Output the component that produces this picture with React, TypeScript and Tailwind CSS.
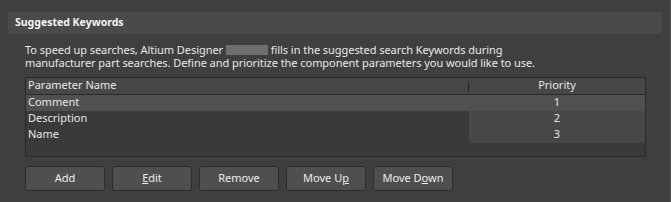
const FONT = { fontFamily: '"Segoe UI", "Noto Sans", "Open Sans", sans-serif' };

const ROWS = [
  { name: 'Comment', priority: '1', selected: true },
  { name: 'Description', priority: '2', selected: false },
  { name: 'Name', priority: '3', selected: false },
];

function Btn({ children }: { children: React.ReactNode }) {
  return (
    <button className="w-[80px] h-[25px] rounded-[3px] border border-[#2c2c2c] bg-[#4f4f4f] text-[11px] text-[#ececec] flex items-center justify-center">
      {children}
    </button>
  );
}

export default function App() {
  return (
    <div
      className="w-[671px] h-[202px] bg-[#3f3f3f] border-r border-[#555555] pl-[8px] pr-[8px] pt-[12px] overflow-hidden text-[#e8e8e8]"
      style={FONT}
    >
      {/* Header */}
      <div className="h-[22px] bg-[#4a4a4a] pl-[7px] flex items-center text-[10.5px] font-bold text-[#f4f4f4]">
        Suggested Keywords
      </div>

      <div className="pl-[17px] pr-[16px]">
        <p className="mt-[10px] text-[11px] leading-[12.5px] tracking-[-0.05px] text-[#e8e8e8]">
          To speed up searches, Altium Designer{' '}
          <span className="inline-block align-middle w-[42px] h-[10px] bg-[#6e6e6e] mb-[2px]" />{' '}
          fills in the suggested search Keywords during
          <br />
          manufacturer part searches. Define and prioritize the component parameters you would like to use.
        </p>

        {/* Table */}
        <div className="mt-[7px] h-[80px] border border-[#2a2a2a] bg-[#3a3a3a] text-[11px]">
          <div className="flex h-[17px] bg-[#474747] border-b border-[#2a2a2a]">
            <div className="w-[443px] pl-[2px] flex items-center relative">
              Parameter Name
              <span className="absolute right-0 top-[4px] h-[10px] w-px bg-[#222222]" />
            </div>
            <div className="flex-1 flex items-center justify-center">Priority</div>
          </div>
          {ROWS.map(r => (
            <div key={r.name} className={r.selected ? 'flex h-[16px] bg-[#505050]' : 'flex h-[16px]'}>
              <div className="w-[443px] pl-[2px] flex items-center">{r.name}</div>
              <div className={r.selected ? 'flex-1 flex items-center justify-center' : 'flex-1 flex items-center justify-center bg-[#474747]'}>
                {r.priority}
              </div>
            </div>
          ))}
        </div>

        {/* Buttons */}
        <div className="mt-[9px] flex gap-[7px]">
          <Btn>Add</Btn>
          <Btn><span><span className="underline">E</span>dit</span></Btn>
          <Btn>Remove</Btn>
          <Btn><span>Move U<span className="underline">p</span></span></Btn>
          <Btn><span>Move D<span className="underline">o</span>wn</span></Btn>
        </div>
      </div>
    </div>
  );
}
